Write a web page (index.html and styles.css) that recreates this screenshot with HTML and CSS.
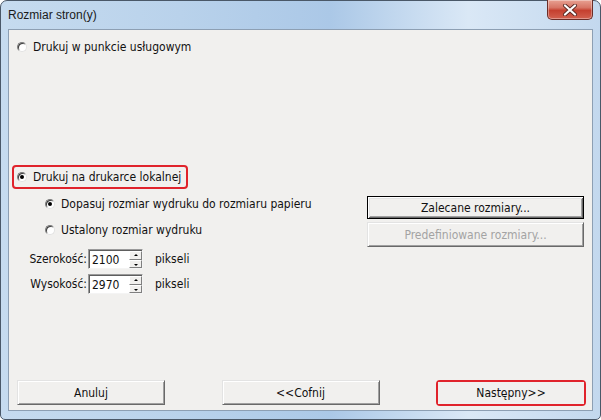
FILE: index.html
```html
<!DOCTYPE html>
<html lang="pl">
<head>
<meta charset="utf-8">
<title>Rozmiar stron(y)</title>
<link rel="stylesheet" href="styles.css">
</head>
<body>
<div class="window">
  <div class="titlebar">
    <span class="title">Rozmiar stron(y)</span>
    <div class="close">
      <svg width="16" height="12" viewBox="0 0 16 12"><path d="M3 1.5 L13 10.5 M13 1.5 L3 10.5" stroke="#5a2a24" stroke-width="4" stroke-linecap="round"/><path d="M3 1.5 L13 10.5 M13 1.5 L3 10.5" stroke="#fff" stroke-width="2.2" stroke-linecap="round"/></svg>
    </div>
  </div>
  <div class="client">
    <div class="opt opt-top">
      <span class="radio"></span><span>Drukuj w punkcie usługowym</span>
    </div>
    <div class="mark mark-local">
      <div class="opt"><span class="radio checked"></span><span>Drukuj na drukarce lokalnej</span></div>
    </div>
    <div class="local">
      <div class="local-left">
        <div class="opt sub"><span class="radio checked"></span><span>Dopasuj rozmiar wydruku do rozmiaru papieru</span></div>
        <div class="opt sub sub2"><span class="radio"></span><span>Ustalony rozmiar wydruku</span></div>
        <div class="dim dim1">
          <span class="dim-label">Szerokość:</span>
          <div class="spin"><span class="spin-val">2100</span><span class="spin-btns"><span class="sb up"></span><span class="sb down"></span></span></div>
          <span class="unit">pikseli</span>
        </div>
        <div class="dim dim2">
          <span class="dim-label">Wysokość:</span>
          <div class="spin"><span class="spin-val">2970</span><span class="spin-btns"><span class="sb up"></span><span class="sb down"></span></span></div>
          <span class="unit">pikseli</span>
        </div>
      </div>
      <div class="local-right">
        <div class="btn btn-default">Zalecane rozmiary...</div>
        <div class="btn btn-disabled">Predefiniowane rozmiary...</div>
      </div>
    </div>
    <div class="footer">
      <div class="btn btn-cancel">Anuluj</div>
      <div class="btn btn-back">&lt;&lt;Cofnij</div>
      <div class="mark mark-next"><div class="btn btn-next">Następny&gt;&gt;</div></div>
    </div>
  </div>
</div>
</body>
</html>
```

FILE: styles.css
```css
* { box-sizing: border-box; }
html, body { margin: 0; padding: 0; background: #fff; }
body { width: 601px; height: 420px; overflow: hidden; }

.window {
  width: 601px;
  height: 420px;
  border: 1px solid #4a5868;
  border-radius: 7px 7px 5px 5px;
  padding: 0 7px 8px 7px;
  background: linear-gradient(90deg, #c6dbef 0%, #b9d2eb 30%, #abc8e7 55%, #dae8f6 78%, #c3d8ee 100%);
  display: flex;
  flex-direction: column;
  font-family: "DejaVu Sans Condensed", "Liberation Sans", sans-serif;
  font-size: 12px;
  color: #111;
}

.titlebar {
  height: 28px;
  display: flex;
  justify-content: space-between;
  align-items: flex-start;
}
.title {
  font-family: "Liberation Sans", Arial, sans-serif;
  font-size: 12px;
  color: #1a1a1a;
  padding-top: 7px;
}
.close {
  width: 46px;
  height: 20px;
  margin-top: -1px;
  border: 1px solid #6b2d27;
  border-top: none;
  border-radius: 0 0 5px 5px;
  background: linear-gradient(180deg, #e8a192 0%, #d77565 40%, #c5402f 55%, #d2614f 100%);
  display: flex;
  align-items: center;
  justify-content: center;
  box-shadow: inset 0 0 0 1px rgba(255,255,255,0.35);
}

.client {
  flex: 1;
  border: 1px solid #8d9fb3;
  background: #f1f0ee;
  display: flex;
  flex-direction: column;
}

.opt {
  display: flex;
  align-items: center;
  height: 14px;
  gap: 6px;
  white-space: nowrap;
}
.opt-top { margin-top: 10px; padding-left: 8px; }

.radio {
  width: 10px;
  height: 10px;
  flex: none;
  border-radius: 50%;
  background: #fff;
  border: 1px solid;
  border-color: #7a7a7a #e2e2e2 #e2e2e2 #7a7a7a;
  box-shadow: inset 1px 1px 0 #3c3c3c;
  position: relative;
}
.radio.checked::after {
  content: "";
  position: absolute;
  left: 2px;
  top: 2px;
  width: 4px;
  height: 4px;
  border-radius: 50%;
  background: #000;
}

.mark {
  border: 2px solid #e0232b;
  border-radius: 4px;
}
.mark-local {
  margin-top: 111px;
  margin-left: 3px;
  width: 176px;
  height: 24px;
  padding: 3px 0 0 3px;
}

.local {
  display: grid;
  grid-template-columns: 1fr 217px;
  padding-right: 8px;
}
.local-left { padding-top: 8px; }
.sub { padding-left: 36px; }
.sub2 { margin-top: 12px; }

.dim {
  display: flex;
  align-items: center;
  height: 20px;
  padding-left: 19px;
}
.dim1 { margin-top: 12px; }
.dim2 { margin-top: 5px; }
.dim-label { width: 60px; text-align: right; padding-right: 1px; white-space: nowrap; }
.spin {
  width: 55px;
  height: 20px;
  background: #fff;
  border: 1px solid;
  border-color: #9a9a9a #f4f4f4 #f4f4f4 #9a9a9a;
  box-shadow: inset 1px 1px 0 #5e5e5e;
  display: flex;
  align-items: stretch;
  justify-content: space-between;
  padding: 1px 0 0 3px;
}
.spin-val { align-self: center; font-size: 12px; padding-top: 1px; }
.spin-btns {
  width: 13px;
  display: flex;
  flex-direction: column;
}
.sb {
  flex: 1;
  background: #f1f0ee;
  border: 1px solid;
  border-color: #fff #7f7f7f #7f7f7f #fff;
  position: relative;
}
.sb::after {
  content: "";
  position: absolute;
  left: 4px;
  width: 0;
  height: 0;
  border-left: 2px solid transparent;
  border-right: 2px solid transparent;
}
.sb.up::after { top: 2px; border-bottom: 2px solid #000; }
.sb.down::after { top: 3px; border-top: 2px solid #000; }
.unit { margin-left: 12px; }

.local-right {
  padding-top: 7px;
  display: flex;
  flex-direction: column;
  gap: 3px;
}

.btn {
  display: flex;
  align-items: center;
  justify-content: center;
  background: #f1f0ee;
  border: 1px solid;
  border-color: #e3e3e3 #696969 #696969 #e3e3e3;
  box-shadow: inset 1px 1px 0 #fff, inset -1px -1px 0 #a0a0a0;
  font-size: 12px;
  white-space: nowrap;
}
.btn-default {
  height: 23px;
  border: 1px solid #000;
  box-shadow: inset 1px 1px 0 #fff, inset -1px -1px 0 #696969, inset 2px 2px 0 #e3e3e3, inset -2px -2px 0 #a0a0a0;
}
.btn-disabled { height: 25px; color: #a3a3a3; }

.footer {
  margin-top: auto;
  display: flex;
  justify-content: space-between;
  align-items: flex-end;
  padding: 0 6px 5px 8px;
}
.btn-cancel { width: 148px; height: 25px; }
.btn-back { width: 158px; height: 25px; }
.mark-next {
  width: 150px;
  height: 26px;
  margin-bottom: -1px;
}
.btn-next {
  width: 100%;
  height: 100%;
  border: none;
  box-shadow: none;
  background: #f1f0ee;
}
```
